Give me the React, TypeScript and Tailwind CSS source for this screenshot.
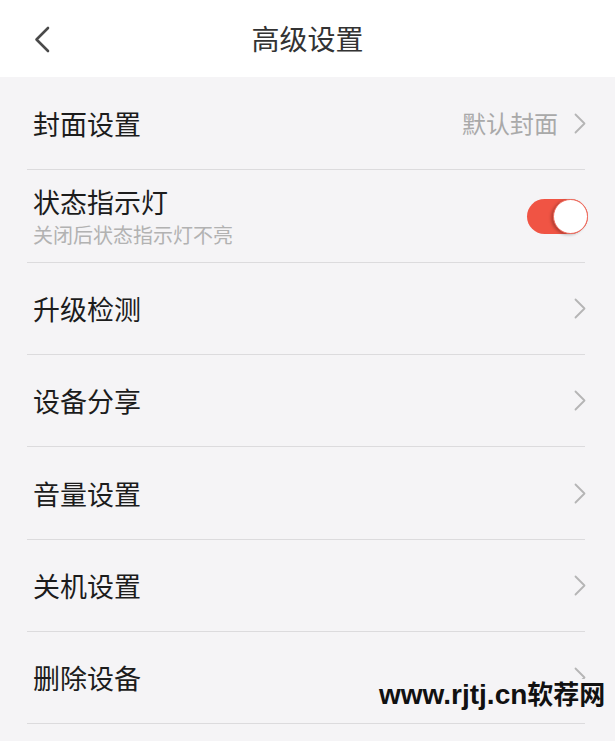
import React from "react";

type Row = {
  label: string;
  sub?: string;
  value?: string;
  toggle?: boolean;
  h: string;
};

const rows: Row[] = [
  { label: "封面设置", value: "默认封面", h: "h-[93px]" },
  { label: "状态指示灯", sub: "关闭后状态指示灯不亮", toggle: true, h: "h-[93px]" },
  { label: "升级检测", h: "h-[92px]" },
  { label: "设备分享", h: "h-[92px]" },
  { label: "音量设置", h: "h-[93px]" },
  { label: "关机设置", h: "h-[92px]" },
  { label: "删除设备", h: "h-[92px]" },
];

const Chevron = () => (
  <svg width="12" height="21" viewBox="0 0 12 21" fill="none" className="shrink-0">
    <path d="M1.5 1.5 L10.5 10.5 L1.5 19.5" stroke="#b5b5b5" strokeWidth="1.8" strokeLinecap="round" strokeLinejoin="round" />
  </svg>
);

const Toggle = () => (
  <div className="relative w-[61px] h-[35px] rounded-full bg-[#f05444] mr-[-3px]">
    <div className="absolute right-0 top-0 w-[35px] h-[35px] rounded-full bg-white border border-[#ee6a5c] shadow-[-2px_1px_3px_rgba(0,0,0,0.25)]" />
  </div>
);

export default function App() {
  return (
    <div className="relative w-[615px] h-[741px] overflow-hidden bg-[#f5f4f6] font-['Noto_Sans_CJK_SC','Noto_Sans',sans-serif]">
      {/* Header */}
      <div className="grid grid-cols-[1fr_auto_1fr] items-center h-[77px] bg-white">
        <div className="pl-[34px] pt-[1px]">
          <svg width="16" height="27" viewBox="0 0 16 27" fill="none">
            <path d="M14 2 L2.5 13.5 L14 25" stroke="#4a4a4a" strokeWidth="2.6" strokeLinecap="round" strokeLinejoin="round" />
          </svg>
        </div>
        <h1 className="text-[28px] leading-none text-[#333] pb-[1px]">高级设置</h1>
        <div />
      </div>

      {/* List */}
      <div className="pl-[27px] pr-[30px]">
        {rows.map((r) => (
          <div
            key={r.label}
            className={`${r.h} flex items-center justify-between border-b border-[#dcdbdd] pl-[6px]`}
          >
            <div className="flex flex-col">
              <span className="text-[27px] leading-none text-[#1c1c1c]">{r.label}</span>
              {r.sub && (
                <span className="text-[20px] leading-none text-[#b2b2b2] mt-[10px]">{r.sub}</span>
              )}
            </div>
            {r.toggle ? (
              <Toggle />
            ) : (
              <div className="flex items-center gap-[16px] mr-[-1px]">
                {r.value && (
                  <span className="text-[24px] leading-none text-[#a9a9a9]">{r.value}</span>
                )}
                <Chevron />
              </div>
            )}
          </div>
        ))}
      </div>

      {/* Watermark */}
      <div className="absolute left-[379px] top-[679px] flex items-baseline whitespace-nowrap bg-[#f5f4f6] leading-[28px] font-bold text-[#111]">
        <span className="font-['Liberation_Sans',sans-serif] text-[28px]">www.rjtj.cn</span>
        <span className="text-[26px]">软荐网</span>
      </div>
    </div>
  );
}
